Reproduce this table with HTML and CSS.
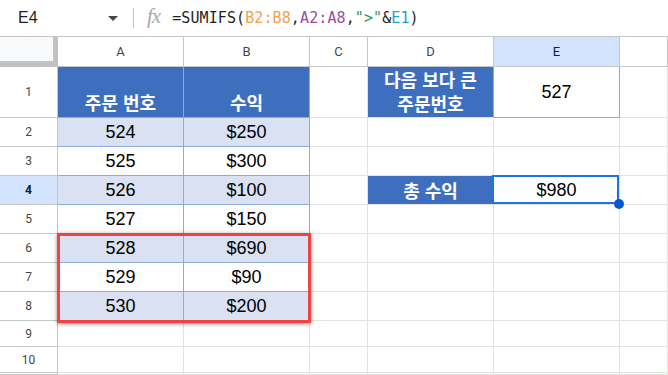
FILE: index.html
```html
<!DOCTYPE html>
<html lang="ko">
<head>
<meta charset="utf-8">
<title>SUMIFS</title>
<link rel="stylesheet" href="styles.css">
</head>
<body>
<div class="fbar">
  <div class="namebox">
    <span class="name">E4</span>
    <span class="caret"></span>
  </div>
  <div class="divider"></div>
  <span class="fx">fx</span>
  <span class="formula">=SUMIFS(<span class="f-or">B2:B8</span>,<span class="f-pu">A2:A8</span>,<span class="f-gr">"&gt;"</span>&amp;<span class="f-te">E1</span>)</span>
</div>
<div class="sheet">
  <div class="corner"></div>
  <div class="ch">A</div><div class="ch">B</div><div class="ch">C</div><div class="ch">D</div><div class="ch ch-sel">E</div><div class="ch"></div>

  <div class="rh">1</div>
  <div class="c hd tb bottom">주문 번호</div>
  <div class="c hd tb bottom">수익</div>
  <div class="c"></div>
  <div class="c hd tb-r two">다음 보다 큰<br>주문번호</div>
  <div class="c tb num">527</div>
  <div class="c"></div>

  <div class="rh">2</div>
  <div class="c band tb num">524</div><div class="c band tb num">$250</div>
  <div class="c"></div><div class="c"></div><div class="c"></div><div class="c"></div>

  <div class="rh">3</div>
  <div class="c tb num">525</div><div class="c tb num">$300</div>
  <div class="c"></div><div class="c"></div><div class="c"></div><div class="c"></div>

  <div class="rh rh-sel">4</div>
  <div class="c band tb num">526</div><div class="c band tb num">$100</div>
  <div class="c"></div>
  <div class="c hd">총 수익</div>
  <div class="c num">$980</div>
  <div class="c"></div>

  <div class="rh">5</div>
  <div class="c tb num">527</div><div class="c tb num">$150</div>
  <div class="c"></div><div class="c"></div><div class="c"></div><div class="c"></div>

  <div class="rh">6</div>
  <div class="c band tb num">528</div><div class="c band tb num">$690</div>
  <div class="c"></div><div class="c"></div><div class="c"></div><div class="c"></div>

  <div class="rh">7</div>
  <div class="c tb num">529</div><div class="c tb num">$90</div>
  <div class="c"></div><div class="c"></div><div class="c"></div><div class="c"></div>

  <div class="rh">8</div>
  <div class="c band tb num">530</div><div class="c band tb num">$200</div>
  <div class="c"></div><div class="c"></div><div class="c"></div><div class="c"></div>

  <div class="rh">9</div>
  <div class="c"></div><div class="c"></div><div class="c"></div><div class="c"></div><div class="c"></div><div class="c"></div>

  <div class="rh">10</div>
  <div class="c"></div><div class="c"></div><div class="c"></div><div class="c"></div><div class="c"></div><div class="c"></div>

  <div class="rh"></div>
  <div class="c"></div><div class="c"></div><div class="c"></div><div class="c"></div><div class="c"></div><div class="c"></div>

  <div class="redbox"></div>
  <div class="selection"><span class="handle"></span></div>
</div>
</body>
</html>
```
FILE: styles.css
```css
html, body {
  margin: 0;
  padding: 0;
  background: #ffffff;
  overflow: hidden;
}
body {
  width: 668px;
  height: 375px;
  font-family: "Liberation Sans", Arial, sans-serif;
}

/* formula bar */
.fbar {
  height: 36px;
  border-bottom: 1px solid #c4c7c5;
  display: flex;
  align-items: center;
}
.namebox {
  width: 133px;
  display: flex;
  align-items: center;
  box-sizing: border-box;
  padding-left: 18px;
  padding-right: 15px;
}
.name {
  font-size: 16px;
  color: #1f1f1f;
  flex: 1;
}
.caret {
  width: 0;
  height: 0;
  border-left: 5px solid transparent;
  border-right: 5px solid transparent;
  border-top: 5px solid #444746;
}
.divider {
  width: 1px;
  height: 20px;
  background: #c4c7c5;
}
.fx {
  margin-left: 13px;
  font-family: "Liberation Serif", serif;
  font-style: italic;
  font-size: 21px;
  color: #a8a8a8;
  letter-spacing: -1px;
  line-height: 1;
  margin-top: -3px;
}
.formula {
  margin-left: 12px;
  font-family: "DejaVu Sans Mono", "Liberation Mono", monospace;
  font-size: 15px;
  letter-spacing: 0.1px;
  color: #1f1f1f;
}
.f-or { color: #f4a14d; }
.f-pu { color: #9b4c9f; }
.f-gr { color: #2e9a5a; }
.f-te { color: #1aa3c7; }

/* sheet */
.sheet {
  position: relative;
  display: grid;
  grid-template-columns: 58px 126px 126px 58px 126px 126px 1fr;
  grid-template-rows: 30px 51px repeat(7, 29px) 26px 26px 2px;
}
.sheet > div {
  box-sizing: border-box;
}
.corner {
  background: #f8f9fa;
  border-right: 5px solid #c2c2c2;
  border-bottom: 6px solid #c2c2c2;
}
.ch {
  border-right: 1px solid #c4c7c5;
  border-bottom: 1px solid #c4c7c5;
  display: flex;
  align-items: center;
  justify-content: center;
  font-family: Roboto, "Liberation Sans", sans-serif;
  font-size: 13px;
  color: #444746;
}
.ch-sel {
  background: #d3e3fd;
  color: #041e49;
}
.rh {
  border-right: 1px solid #c4c7c5;
  border-bottom: 1px solid #c4c7c5;
  display: flex;
  align-items: center;
  justify-content: center;
  font-family: Roboto, "Liberation Sans", sans-serif;
  font-size: 12px;
  color: #444746;
}
.rh-sel {
  background: #d3e3fd;
  color: #041e49;
  font-weight: 700;
}
.c {
  border-right: 1px solid #e1e3e1;
  border-bottom: 1px solid #e1e3e1;
  display: flex;
  align-items: center;
  justify-content: center;
  text-align: center;
}
.num {
  font-family: "Liberation Sans", Arial, sans-serif;
  font-size: 18px;
  color: #000000;
  padding-top: 1px;
}
.hd {
  background: #3e6fbf;
  color: #ffffff;
  font-family: "Noto Sans CJK KR", "Noto Sans", sans-serif;
  font-weight: 700;
  font-size: 18px;
  line-height: 24px;
}
.band {
  background: #d9e1f2;
}
.tb {
  border-right-color: #8eaadb;
  border-bottom-color: #8eaadb;
}
.tb-r {
  border-right-color: #8eaadb;
}
.bottom {
  align-items: flex-end;
  padding-bottom: 3px;
}
.two {
  padding-bottom: 3px;
}

/* overlays */
.redbox {
  position: absolute;
  grid-row: 7 / 10;
  grid-column: 2 / 4;
  top: -1px;
  left: -1px;
  right: -1px;
  bottom: -2px;
  border: 3px solid #ee4444;
  box-shadow: 0 1px 4px rgba(0, 0, 0, 0.45);
}
.selection {
  position: absolute;
  grid-row: 5 / 6;
  grid-column: 6 / 7;
  top: -1px;
  left: -2px;
  right: 1px;
  bottom: 1px;
  border: 2px solid #1a73e8;
}
.handle {
  position: absolute;
  right: -7px;
  bottom: -7px;
  width: 10px;
  height: 10px;
  border-radius: 50%;
  background: #0b57d0;
}
```
